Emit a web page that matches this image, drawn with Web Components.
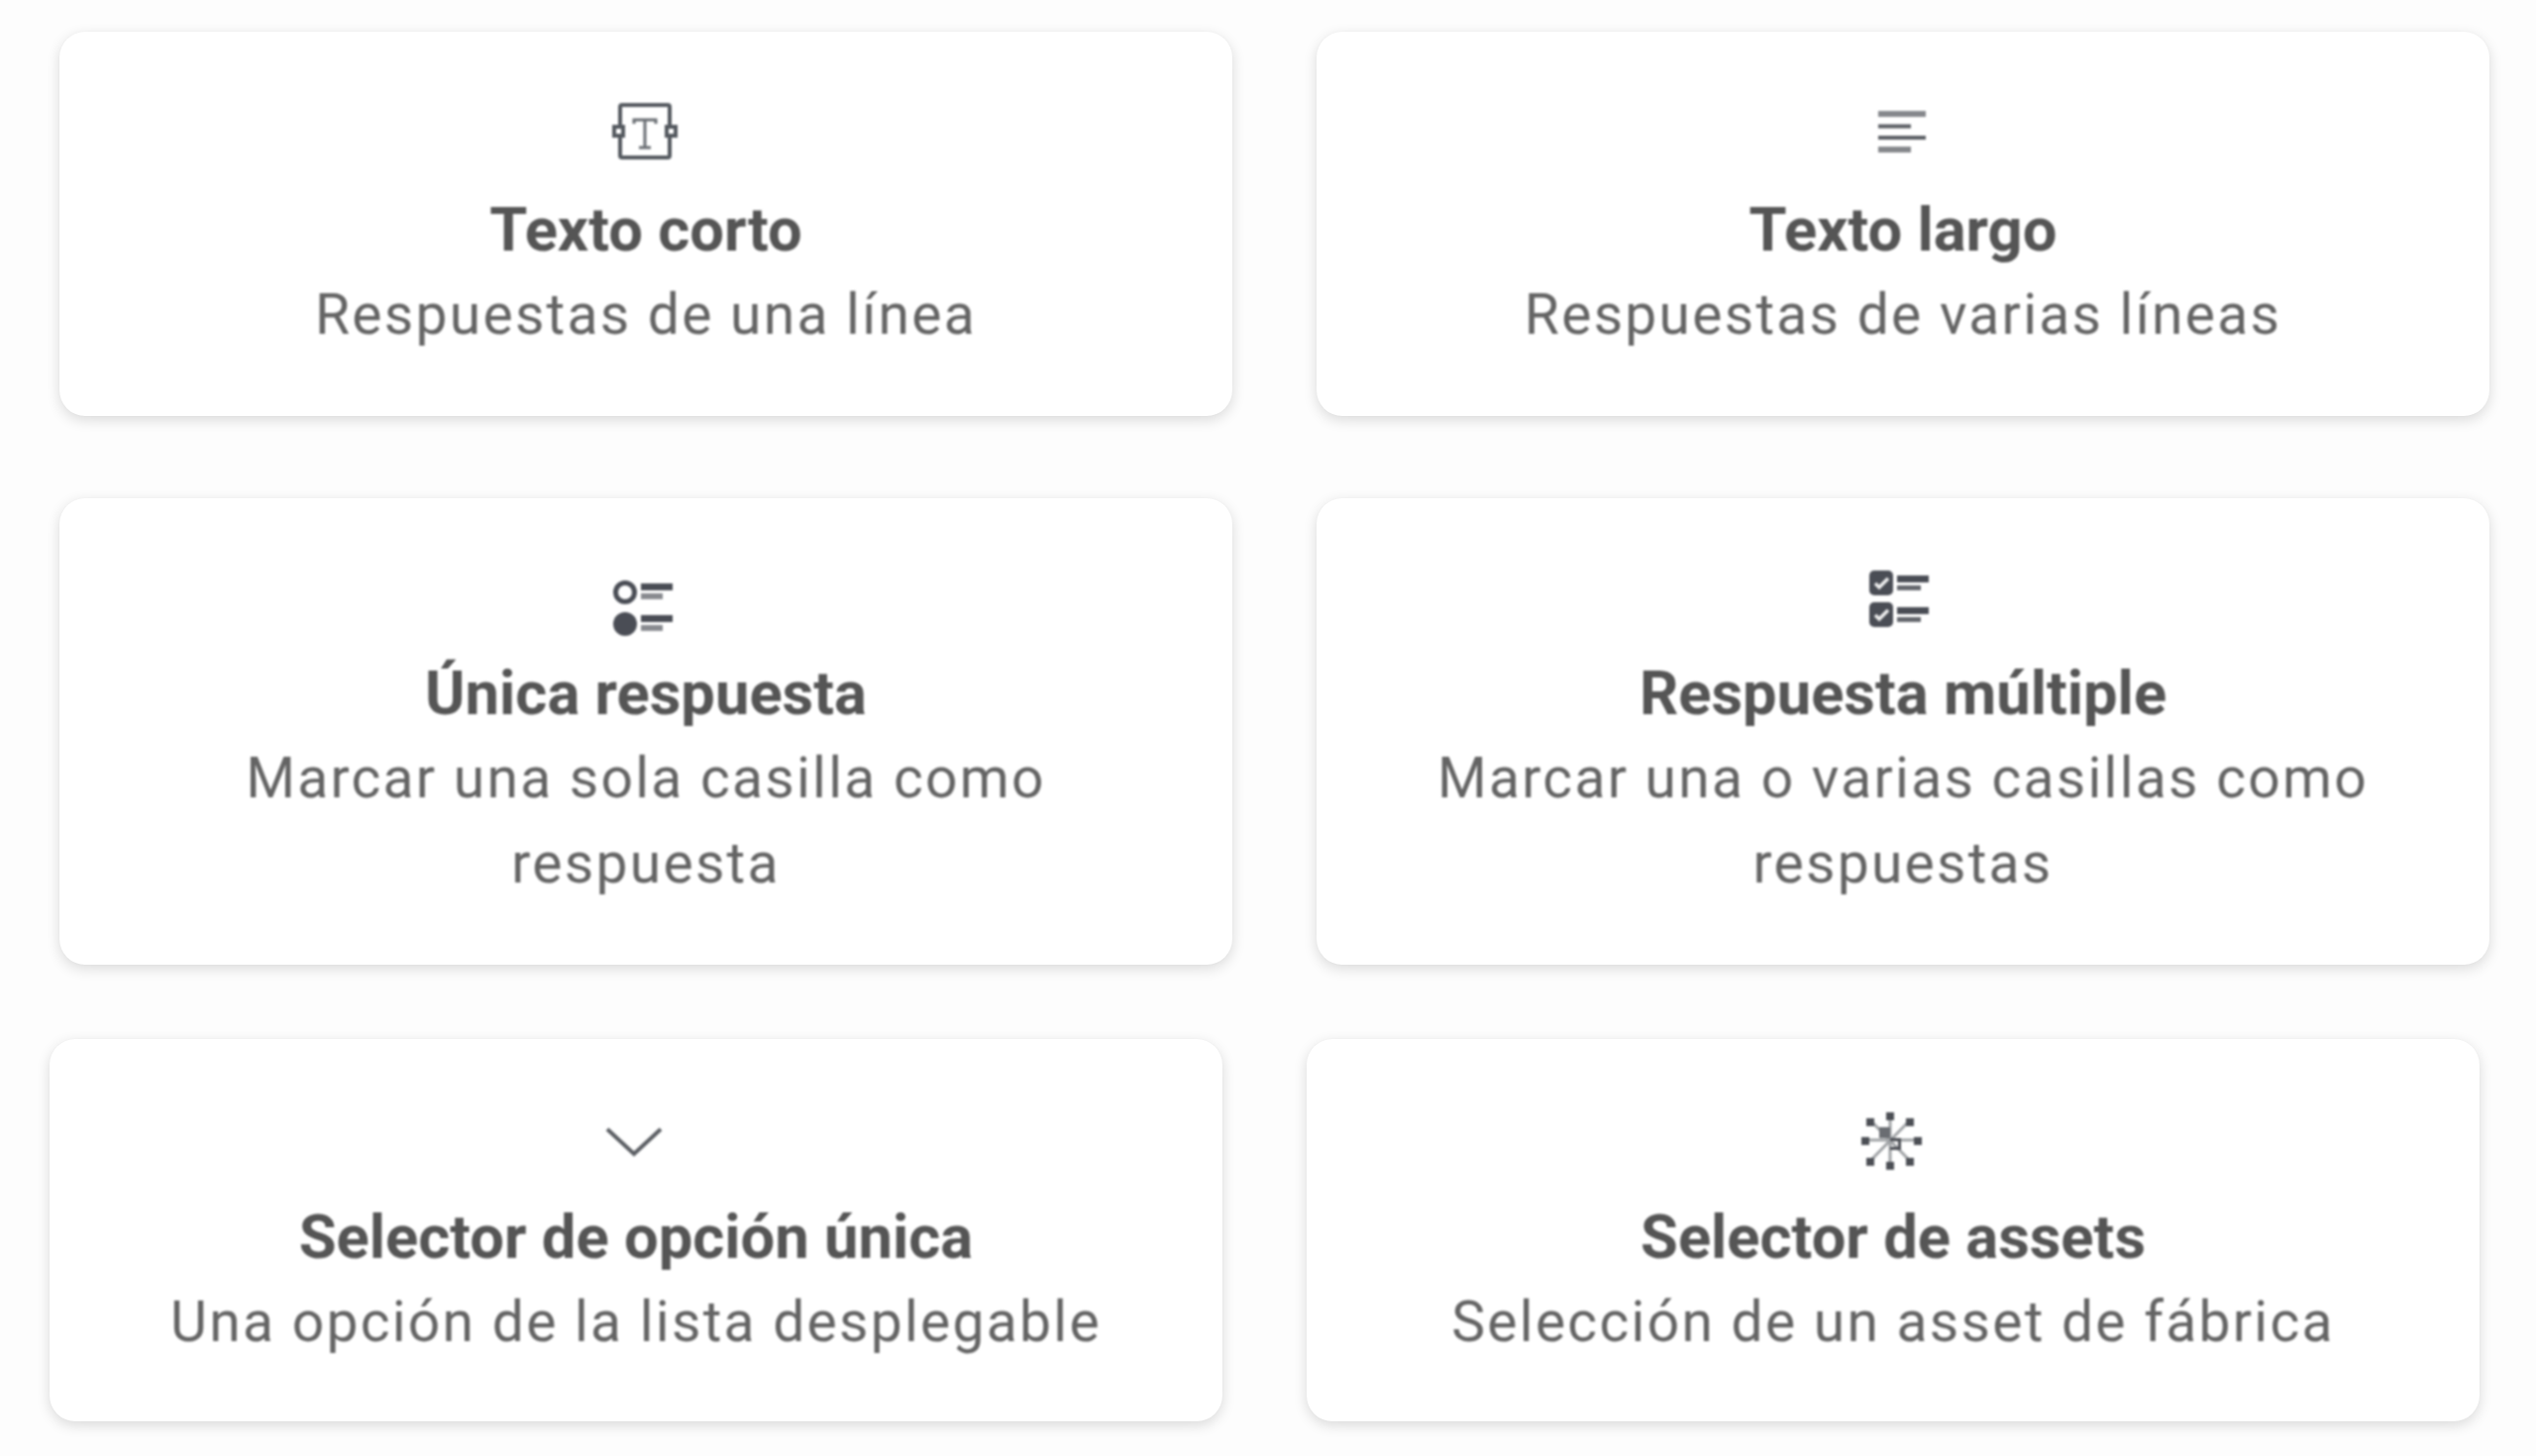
<!DOCTYPE html>
<html lang="es">
<head>
<meta charset="utf-8">
<title>Tipos de pregunta</title>
<style>
  html, body { margin: 0; background: #fdfdfd; }
  body { font-family: Roboto, "Liberation Sans", sans-serif; color: #555; min-height: 1470px; box-sizing: border-box; }
  svg { overflow: visible; }
</style>
</head>
<body>
<question-types>
  <type-row>
    <type-card heading="Texto corto" text="Respuestas de una línea">
      <svg slot="icon" width="80" height="80" viewBox="0 0 80 80" fill="none" stroke="#555a60" stroke-width="4">
        <rect x="14" y="14" width="50" height="53" rx="2"/>
        <rect x="8" y="36" width="9" height="9" fill="#fff"/>
        <rect x="61" y="36" width="9" height="9" fill="#fff"/>
        <path d="M28 33v-4h22v4M39 29v28M33 57h12" stroke="#6b6f74" stroke-width="3"/>
      </svg>
    </type-card>
    <type-card heading="Texto largo" text="Respuestas de varias líneas">
      <svg slot="icon" width="80" height="80" viewBox="0 0 80 80" fill="#5c5f64">
        <rect x="15" y="20" width="48" height="6" opacity=".75"/>
        <rect x="15" y="33.500" width="33" height="4"/>
        <rect x="15" y="45" width="48" height="4"/>
        <rect x="15" y="56" width="33" height="6" opacity=".75"/>
      </svg>
    </type-card>
  </type-row>
  <type-row class="tall">
    <type-card heading="Única respuesta" text="Marcar una sola casilla como respuesta">
      <svg slot="icon" width="80" height="80" viewBox="0 0 80 80" fill="#4a4d55">
        <circle cx="19" cy="38" r="9.500" fill="none" stroke="#4a4d55" stroke-width="5"/>
        <circle cx="19" cy="70" r="12"/>
        <rect x="35" y="29" width="32" height="7"/>
        <rect x="35" y="39" width="22" height="6" opacity=".65"/>
        <rect x="35" y="61" width="32" height="7"/>
        <rect x="35" y="71" width="22" height="6" opacity=".65"/>
      </svg>
    </type-card>
    <type-card heading="Respuesta múltiple" text="Marcar una o varias casillas como respuestas">
      <svg slot="icon" width="80" height="80" viewBox="0 0 80 80" fill="#4a4d55">
        <rect x="6" y="16" width="24" height="25" rx="5"/>
        <rect x="6" y="48" width="24" height="25" rx="5"/>
        <path d="M12 29l4 4 9-9M12 61l4 4 9-9" fill="none" stroke="#eee" stroke-width="3.500"/>
        <rect x="34" y="21" width="32" height="7"/>
        <rect x="34" y="31" width="24" height="5" opacity=".85"/>
        <rect x="34" y="53" width="32" height="7"/>
        <rect x="34" y="63" width="24" height="5" opacity=".85"/>
      </svg>
    </type-card>
  </type-row>
  <type-row class="shifted">
    <type-card heading="Selector de opción única" text="Una opción de la lista desplegable">
      <svg slot="icon" width="80" height="80" viewBox="0 0 80 80" fill="none" stroke="#5c5f64" stroke-width="4">
        <path d="M11 31l27 25 27-25"/>
      </svg>
    </type-card>
    <type-card heading="Selector de assets" text="Selección de un asset de fábrica">
      <svg slot="icon" width="80" height="80" viewBox="0 0 80 80" fill="#4c4f55">
        <g transform="translate(0 3)">
          <path d="M37 14v51M12 39h51M18 20l38 39M56 20L18 59" stroke="#a0a3a6" stroke-width="3"/>
          <rect x="33" y="11" width="8" height="8"/>
          <rect x="33" y="61" width="8" height="8"/>
          <rect x="8" y="36" width="8" height="8"/>
          <rect x="61" y="36" width="8" height="8"/>
          <rect x="13" y="17" width="8" height="8"/>
          <rect x="53" y="17" width="8" height="8"/>
          <rect x="13" y="57" width="8" height="8"/>
          <rect x="53" y="57" width="8" height="8"/>
          <rect x="26" y="26" width="11" height="11" fill="#6a6d72"/>
          <path d="M37 37h11v12H37v-3h8v-6h-8z"/>
        </g>
      </svg>
    </type-card>
  </type-row>
</question-types>

<script>
class QuestionTypes extends HTMLElement {
  constructor() {
    super();
    this.attachShadow({ mode: 'open' }).innerHTML = `
      <style>
        :host { display: flex; flex-direction: column; gap: 83px; padding: 32px 0 0; }
        ::slotted(.tall) { --top: 57px; }
        ::slotted(.shifted) { margin-left: -10px; margin-top: -8px; --bottom: 57px; }
      </style>
      <slot></slot>`;
  }
}

class TypeRow extends HTMLElement {
  constructor() {
    super();
    this.attachShadow({ mode: 'open' }).innerHTML = `
      <style>
        :host { display: grid; grid-template-columns: 1184px 1184px; gap: 85px; padding-left: 60px; }
      </style>
      <slot></slot>`;
  }
}

class TypeCard extends HTMLElement {
  constructor() {
    super();
    this.attachShadow({ mode: 'open' }).innerHTML = `
      <style>
        :host {
          display: flex; flex-direction: column; align-items: center; text-align: center;
          box-sizing: border-box;
          padding: var(--top, 60px) 80px var(--bottom, 59px);
          background: #fff; border-radius: 26px;
          box-shadow: 0 4px 14px rgba(0,0,0,.14), 0 0 2px rgba(0,0,0,.03);
        }
        .icon, .title, .text { filter: blur(.9px); }
        .icon { height: 97px; }
        .title { font-size: 61.5px; font-weight: 700; line-height: 86px; color: #555; }
        .text { font-size: 57px; line-height: 86px; letter-spacing: 2.25px; color: #646464; }
      </style>
      <div class="icon"><slot name="icon"></slot></div>
      <div class="title"></div>
      <div class="text"></div>`;
  }

  connectedCallback() {
    this.shadowRoot.querySelector('.title').textContent = this.getAttribute('heading');
    this.shadowRoot.querySelector('.text').textContent = this.getAttribute('text');
  }
}

customElements.define('question-types', QuestionTypes);
customElements.define('type-row', TypeRow);
customElements.define('type-card', TypeCard);
</script>
</body>
</html>
